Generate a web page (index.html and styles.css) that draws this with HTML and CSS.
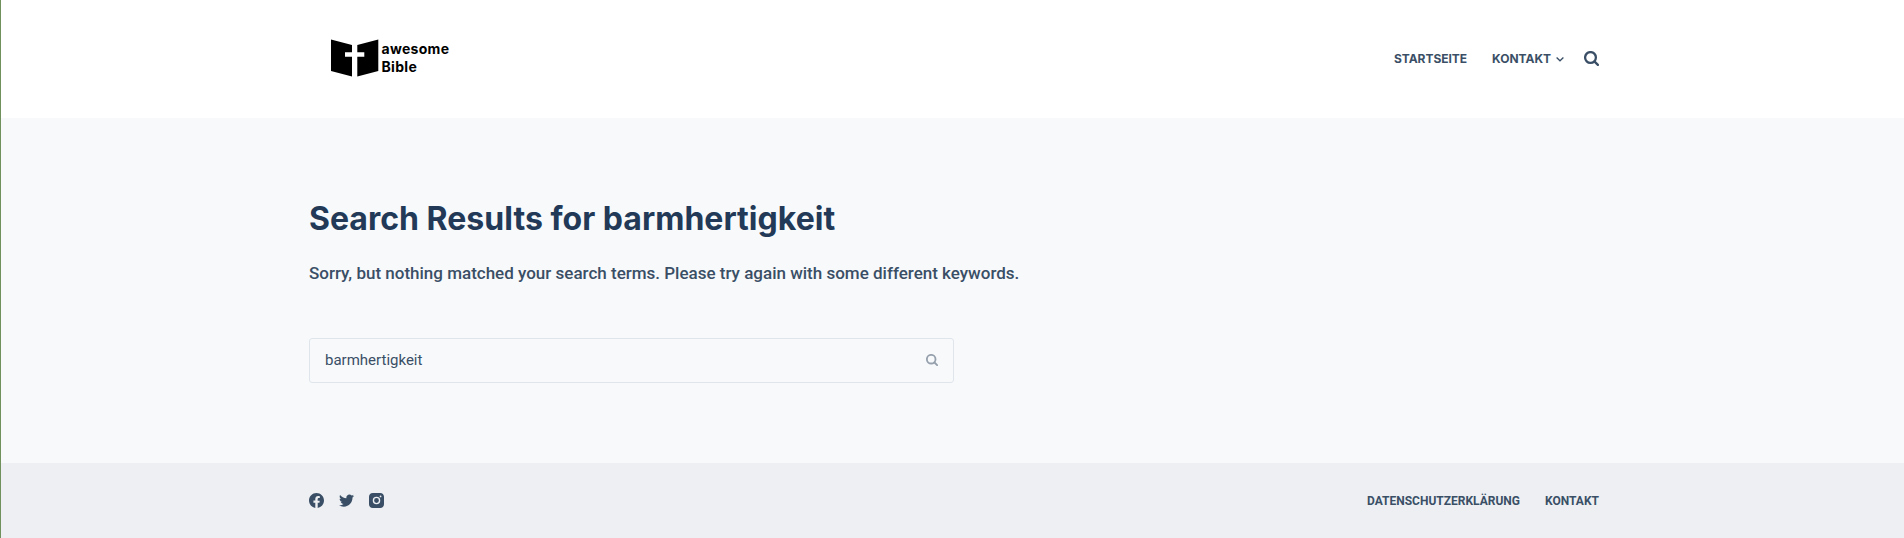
FILE: index.html
```html
<!DOCTYPE html>
<html lang="de">
<head>
<meta charset="utf-8">
<title>Search Results for barmhertigkeit</title>
<link rel="stylesheet" href="styles.css">
</head>
<body>
<header class="header">
  <div class="container bar">
    <a class="logo">
      <svg width="48" height="38" viewBox="0 0 48 38"><path d="M0 .5 21 6v7.200h-7v4.600h7V37.500L0 32zM47.300.5 26.300 6v7.200h7v4.600h-7V37.500l21-5.500z"/></svg>
      <span class="logo-text">awesome<br>Bible</span>
    </a>
    <nav class="nav">
      <a>STARTSEITE</a>
      <a class="has-menu">KONTAKT <svg class="chevron" width="8" height="8" viewBox="0 0 8 8"><path d="M.6 2.500 4 5.800 7.400 2.500"/></svg></a>
      <svg class="search" width="15" height="15" viewBox="0 0 15 15"><circle cx="6.500" cy="6.500" r="5.400"/><path d="m10.600 10.600 3.300 3.300"/></svg>
    </nav>
  </div>
</header>
<main class="main">
  <div class="container">
    <h1 class="title">Search Results for barmhertigkeit</h1>
    <p class="message">Sorry, but nothing matched your search terms. Please try again with some different keywords.</p>
    <form class="form">
      <input class="field" type="text" value="barmhertigkeit">
      <svg class="search small" width="12" height="12" viewBox="0 0 15 15"><circle cx="6.500" cy="6.500" r="5.400"/><path d="m10.600 10.600 3.300 3.300"/></svg>
    </form>
  </div>
</main>
<footer class="footer">
  <div class="container bar">
    <div class="social">
      <svg width="15" height="15" viewBox="0 0 20 20"><path d="M20 10.100c0-5.500-4.500-10-10-10S0 4.500 0 10.100c0 5 3.700 9.100 8.400 9.900v-7H5.900v-2.900h2.500V7.900C8.400 5.400 9.900 4 12.200 4c1.100 0 2.200.2 2.200.2v2.500h-1.300c-1.200 0-1.600.8-1.600 1.600v1.900h2.800L13.900 13h-2.300v7c4.700-.8 8.400-4.900 8.400-9.900z"/></svg>
      <svg width="15" height="15" viewBox="0 0 20 20"><path d="M20 3.800c-.7.300-1.500.5-2.400.6.800-.5 1.500-1.300 1.800-2.200-.8.500-1.700.8-2.600 1C16.100 2.400 15 1.900 13.900 1.900c-2.300 0-4.100 1.800-4.100 4.100 0 .3 0 .6.100.9C6.500 6.800 3.400 5.100 1.400 2.600c-.3.600-.5 1.300-.5 2.100 0 1.400.7 2.700 1.800 3.400C2 8.100 1.400 7.900.8 7.600c0 2 1.400 3.700 3.300 4.100-.6.200-1.200.2-1.900.1.500 1.600 2 2.800 3.800 2.800-1.700 1.300-3.800 2-6.100 1.700 1.900 1.200 4.100 1.900 6.400 1.900 7.600 0 11.900-6.400 11.700-12.200.8-.6 1.500-1.300 2-2.200z"/></svg>
      <svg width="15" height="15" viewBox="0 0 20 20"><path fill-rule="evenodd" d="M5 0h10c2.800 0 5 2.200 5 5v10c0 2.800-2.200 5-5 5H5c-2.800 0-5-2.200-5-5V5c0-2.800 2.200-5 5-5zm5 5a5 5 0 1 0 0 10 5 5 0 0 0 0-10zm0 1.800a3.200 3.200 0 1 1 0 6.400 3.200 3.200 0 0 1 0-6.400zM15.400 3.300a1.200 1.200 0 1 0 0 2.400 1.200 1.200 0 0 0 0-2.400z"/></svg>
    </div>
    <nav class="footer-nav"><a>DATENSCHUTZERKLÄRUNG</a><a>KONTAKT</a></nav>
  </div>
</footer>
</body>
</html>
```
FILE: styles.css
```css
* { box-sizing: border-box; }
body {
  margin: 0;
  height: 538px;
  display: flex;
  flex-direction: column;
  border-left: 1px solid #70905c;
  font-family: Roboto, sans-serif;
  color: #3a4f66;
  background: #f8f9fb;
  overflow: hidden;
}
svg { display: block; flex: none; }
.container { width: 1290px; margin-left: 308px; }
.bar { height: 100%; display: flex; align-items: center; justify-content: space-between; }
.header { height: 118px; padding-bottom: 2px; background: #fff; }
.logo { display: flex; align-items: center; gap: 2.500px; padding-left: 22px; color: #000; }
.logo-text { padding-bottom: 1px; font: 700 14px/17.500px Inter, sans-serif; letter-spacing: 0.3px; }
.nav { display: flex; align-items: center; font: 700 12px/16px Inter, sans-serif; gap: 25px; }
.nav a { padding-top: 1px; letter-spacing: -0.03px; }
.has-menu { display: flex; align-items: center; gap: 5px; margin-right: -5px; }
.chevron path { fill: none; stroke: #3a4f66; stroke-width: 1.300; }
.search { fill: none; stroke: #3a4f66; stroke-width: 2.300; stroke-linecap: round; }
.main { height: 345px; padding-top: 77px; }
.title { margin: 0; font: 700 32px/48px Inter, sans-serif; letter-spacing: 0.02px; color: #223a57; }
.message { margin: 16px 0 0; font-size: 17px; font-weight: 500; line-height: 28px; }
.form {
  width: 645px;
  height: 45px;
  margin-top: 51px;
  padding: 0 15px 1px;
  display: flex;
  align-items: center;
  border: 1px solid #e0e5eb;
  border-radius: 3px;
}
.field { flex: 1; min-width: 0; padding: 0; border: 0; outline: 0; background: none; color: #3a4f66; font: 400 15px/20px Roboto, sans-serif; }
.small { stroke: #96a1ad; }
.footer { height: 75px; background: #edeff3; }
.social { display: flex; gap: 15px; fill: #3a4f66; }
.footer-nav { display: flex; gap: 25px; font-size: 12px; font-weight: 700; line-height: 16px; }
```
